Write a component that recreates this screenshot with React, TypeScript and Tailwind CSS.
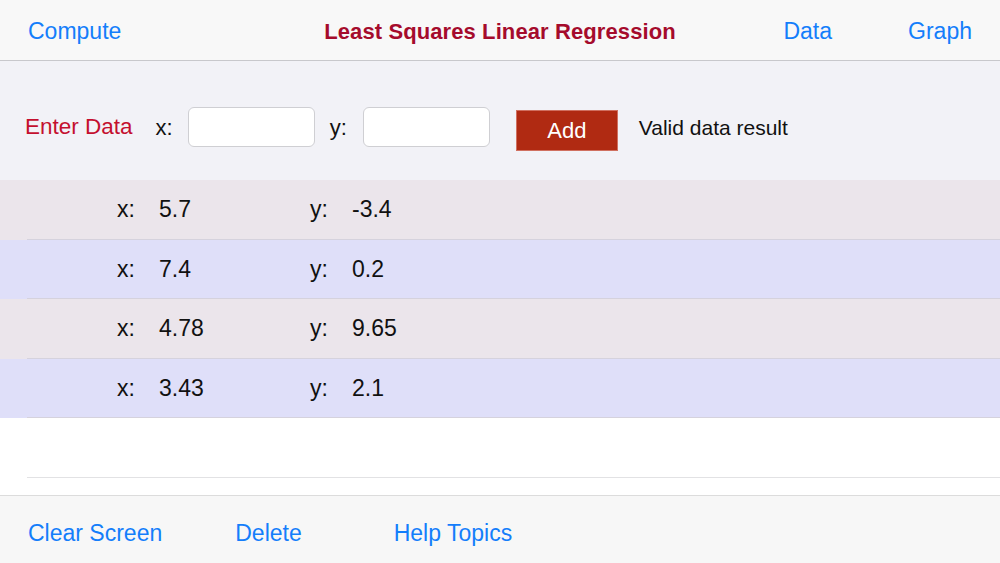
import React from "react";

const rows = [
  { x: "5.7", y: "-3.4", bg: "bg-[#ebe5eb]" },
  { x: "7.4", y: "0.2", bg: "bg-[#dfdff9]" },
  { x: "4.78", y: "9.65", bg: "bg-[#ebe5eb]" },
  { x: "3.43", y: "2.1", bg: "bg-[#dfdff9]" },
];

export default function App() {
  return (
    <div className="w-[1000px] h-[563px] flex flex-col bg-white overflow-hidden font-['Liberation_Sans',Arial,sans-serif]">
      {/* Header */}
      <div className="h-[61px] shrink-0 flex items-center bg-[#f8f8f8] border-b border-[#c8c8cc] text-[23px] pt-[2px]">
        <div className="pl-[28px] w-[300px] text-[#147efb]">Compute</div>
        <div className="flex-1 text-center font-bold text-[22px] text-[#a50b2c] tracking-[0.1px]">Least Squares Linear Regression</div>
        <div className="w-[300px] flex justify-end items-center text-[#147efb]">
          <span className="mr-[76px]">Data</span>
          <span className="mr-[28px]">Graph</span>
        </div>
      </div>

      {/* Enter data */}
      <div className="h-[119px] shrink-0 flex items-center bg-[#f2f2f7] pt-[13px] text-[22px]">
        <span className="ml-[25px] text-[22.5px] text-[#c4102f]">Enter Data</span>
        <span className="ml-[23px] text-[#111]">x:</span>
        <div className="ml-[15px] w-[127px] h-[40px] bg-white border border-[#cfcfd3] rounded-[6px]" />
        <span className="ml-[15px] text-[#111]">y:</span>
        <div className="ml-[16px] w-[127px] h-[40px] bg-white border border-[#cfcfd3] rounded-[6px]" />
        <div className="ml-[26px] w-[102px] h-[41px] mt-[6px] bg-[#b02a12] border border-[#d07060] flex items-center justify-center text-white">
          Add
        </div>
        <span className="ml-[21px] text-[21px] text-[#111] mt-[2px]">Valid data result</span>
      </div>

      {/* Rows */}
      <div className="flex flex-col">
        {rows.map((r, i) => (
          <div key={i} className={`${r.bg} h-[59.5px] flex flex-col`}>
            <div className="flex-1 flex items-center text-[23px] text-[#111]">
              <span className="ml-[117px] w-[42px]">x:</span>
              <span className="w-[151px]">{r.x}</span>
              <span className="w-[42px]">y:</span>
              <span>{r.y}</span>
            </div>
            <div className="ml-[27px] h-px bg-[#d5d2dd]" />
          </div>
        ))}
        <div className="h-[60px] flex flex-col">
          <div className="flex-1" />
          <div className="ml-[27px] h-px bg-[#e2e2e4]" />
        </div>
      </div>

      <div className="flex-1" />

      {/* Footer */}
      <div className="h-[68px] shrink-0 flex items-center bg-[#f7f7f7] border-t border-[#dcdcdc] text-[23px] text-[#147efb] pt-[8px]">
        <span className="ml-[28px]">Clear Screen</span>
        <span className="ml-[73px]">Delete</span>
        <span className="ml-[92px]">Help Topics</span>
      </div>
    </div>
  );
}
